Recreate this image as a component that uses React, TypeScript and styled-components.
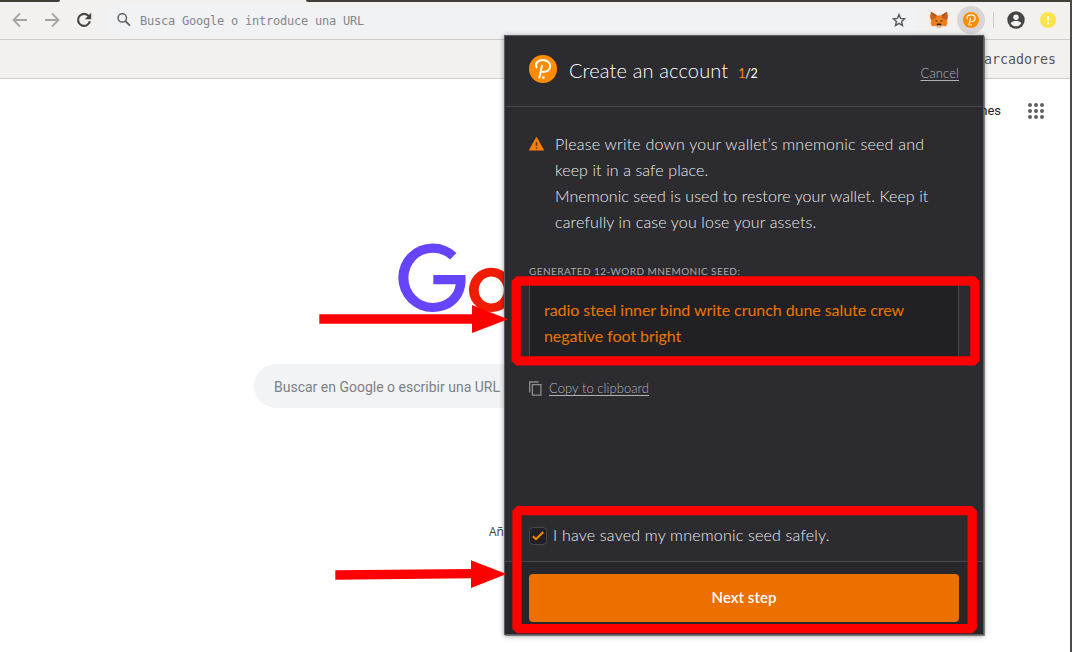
import React from "react";
import styled, { createGlobalStyle } from "styled-components";

const GlobalStyle = createGlobalStyle`
  * { box-sizing: border-box; }
  html, body { margin: 0; padding: 0; background: #fff; overflow: hidden; }
`;

const mono = `"DejaVu Sans Mono", monospace`;
const ui = `Roboto, "Liberation Sans", sans-serif`;
const wallet = `Lato, "Open Sans", sans-serif`;

const Window = styled.div`
  position: relative;
  display: flex;
  flex-direction: column;
  width: 1072px;
  height: 652px;
  background: #fff;
  border-right: 2px solid #4a4b41;
  overflow: hidden;
  font-family: ${ui};
`;

const TabStrip = styled.div`
  display: flex;
  justify-content: space-between;
  height: 2px;
  flex: none;
  background: #f2f1ef;
`;

const InactiveTabs = styled.div<{ $width: number; $side: "left" | "right" }>`
  width: ${(p) => p.$width}px;
  height: 2px;
  background: #403e36;
  border-radius: ${(p) => (p.$side === "left" ? "0 0 3px 0" : "0 0 0 3px")};
`;

const Toolbar = styled.div`
  display: flex;
  align-items: center;
  height: 38px;
  flex: none;
  padding: 0 14px 2px 12px;
  background: #f2f1ef;
  border-bottom: 1px solid #cfcdca;
`;

const NavButtons = styled.div`
  display: flex;
  gap: 16px;
  width: 94px;
`;

const Omnibox = styled.div`
  display: flex;
  align-items: center;
  width: 812px;
  height: 30px;
  padding: 0 12px 0 10px;
  border-radius: 15px;
  background: #f0f2f4;
`;

const OmniText = styled.span`
  flex: 1;
  margin-left: 8px;
  padding-top: 2px;
  font: 12px/16px ${mono};
  letter-spacing: -0.225px;
  color: #85868c;
`;

const Extensions = styled.div`
  display: flex;
  flex: 1;
  align-items: center;
  margin-left: 12px;
`;

const ActiveExtension = styled.div`
  display: flex;
  align-items: center;
  justify-content: center;
  width: 28px;
  height: 28px;
  margin-left: 9px;
  border-radius: 50%;
  background: #d8d6d4;
`;

const Divider = styled.div`
  width: 1px;
  height: 16px;
  margin: 0 13px 0 8px;
  background: #cfcdca;
`;

const UpdateBadge = styled.svg`
  display: block;
  margin-left: auto;
`;

const Bookmarks = styled.div`
  display: flex;
  align-items: center;
  justify-content: flex-end;
  height: 39px;
  flex: none;
  padding: 2px 14px 0 0;
  background: #f2f1ef;
  border-bottom: 1px solid #cfcdca;
  font: 13.3px/18px ${mono};
  color: #55565a;
`;

const Page = styled.main`
  display: flex;
  flex-direction: column;
  flex: 1;
`;

const PageNav = styled.nav`
  display: flex;
  align-items: center;
  justify-content: flex-end;
  gap: 27px;
  height: 64px;
  padding-right: 26px;
  font-size: 13px;
  line-height: 16px;
  color: #222;
  span { padding-bottom: 1px; }
`;

const Logo = styled.svg`
  display: block;
  width: 272px;
  height: 92px;
  margin: 99px 0 0 398px;
  overflow: visible;
`;

const SearchBox = styled.div`
  display: flex;
  align-items: center;
  width: 561px;
  height: 44px;
  margin: 30px 0 0 254px;
  padding: 2px 20px 0;
  border-radius: 22px;
  background: #f1f3f4;
  font-size: 14px;
  color: #7d8085;
`;

const Shortcut = styled.div`
  margin: 117px 0 0 489px;
  font-family: "Open Sans", sans-serif;
  font-size: 12px;
  line-height: 14px;
  color: #3c4043;
`;

const Popup = styled.section`
  position: absolute;
  left: 504px;
  top: 35px;
  display: flex;
  flex-direction: column;
  width: 480px;
  height: 600px;
  border: 1px solid #5b5b61;
  background: #2c2b30;
  box-shadow: 0 0 1px 0.5px rgba(0, 0, 0, 0.4), 0 1px 5px rgba(0, 0, 0, 0.4);
  font-family: ${wallet};
  font-weight: 300;
  color: #ebebed;
`;

const Header = styled.header`
  display: flex;
  align-items: center;
  height: 71px;
  padding: 0 24px;
  border-bottom: 1px solid #47464c;
`;

const HeaderLogo = styled.div`
  display: flex;
  margin: -4px 12px 0 0;
`;

const Text = styled.span<{ $track?: number }>`
  display: block;
  white-space: nowrap;
  letter-spacing: ${(p) => p.$track ?? 0}px;
`;

const Title = styled(Text)`
  margin-top: -2px;
  font-size: 20px;
  color: #fff;
`;

const Step = styled.span`
  flex: 1;
  margin: 4px 0 0 10px;
  font-size: 12.5px;
  letter-spacing: -0.3px;
  font-weight: 400;
  color: #fff;
  em {
    font-style: normal;
    color: #ff8800;
  }
`;

const TextLink = styled.a<{ $track?: number }>`
  font-size: 13px;
  letter-spacing: ${(p) => p.$track ?? 0}px;
  color: #b2b1b4;
  text-decoration: underline;
  text-underline-offset: 2px;
  text-decoration-thickness: 1px;
`;

const CancelLink = styled(TextLink)`
  margin-top: 3px;
`;

const Body = styled.div`
  display: flex;
  flex-direction: column;
  flex: 1;
  padding: 24px 24px 0;
`;

const Notice = styled.div`
  display: flex;
  gap: 11px;
  font-size: 16px;
  line-height: 26px;
  svg { margin-top: 6px; }
`;

const SeedLabel = styled(Text)`
  margin-top: 30px;
  font-size: 10px;
  line-height: 12px;
  font-weight: 400;
  color: #a9a8ab;
`;

const SeedBox = styled.div`
  height: 80px;
  margin-top: 4px;
  padding: 15px 14px;
  border: 1px solid #47464c;
  background: #212025;
  font-size: 16px;
  line-height: 26px;
  font-weight: 400;
  color: #ec7600;
`;

const CopyRow = styled.div`
  display: flex;
  align-items: center;
  gap: 7px;
  margin-top: 18px;
  height: 18px;
`;

const Confirm = styled.label`
  display: flex;
  align-items: center;
  gap: 6px;
  height: 26px;
  margin: auto 0 12px;
  font-size: 16px;
  line-height: 20px;
`;

const ConfirmText = styled(Text)`
  margin-top: -2px;
`;

const Check = styled.span`
  display: flex;
  align-items: center;
  justify-content: center;
  width: 18px;
  height: 18px;
  border: 1px solid #47464c;
  border-radius: 4px;
  background: #212025;
`;

const Footer = styled.footer`
  height: 73px;
  padding: 12px 24px;
  border-top: 1px solid #47464c;
  background: #27262b;
`;

const NextButton = styled.button`
  display: flex;
  align-items: center;
  justify-content: center;
  width: 430px;
  height: 48px;
  padding: 0 0 2px;
  border: 0;
  border-radius: 4px;
  background: #eb7000;
  font: 600 15px/20px ${wallet};
  letter-spacing: 0.05px;
  color: #fff;
`;

const Annotations = styled.svg`
  position: absolute;
  left: 0;
  top: 0;
  pointer-events: none;
`;

const WalletMark = ({ size }: { size: number }) => (
  <svg width={size} height={size} viewBox="0 0 28 28">
    <circle cx="14" cy="14" r="14" fill="#ff8c00" />
    <path
      d="M7.6 12.4C5.6 8.6 9 5 13.8 5c4.4 0 7.400 2.700 7.400 6.100 0 3.700-3 6-7.600 6"
      fill="none"
      stroke="#fff"
      strokeWidth="2"
      strokeLinecap="round"
    />
    <path d="M13 10.800 10.400 22.600" stroke="#fff" strokeWidth="2" strokeLinecap="round" />
    <circle cx="14.400" cy="22.600" r="1.400" fill="#fff" />
  </svg>
);

const Fox = () => (
  <svg width="18" height="17" viewBox="0 0 18 17">
    <path d="M1 .8 6.800 4.400h4.400L17 .8l.8 5.200-1 4 .6 2.200-1.400 3.200-3-.6-2.400 1.800H7.400L5 14.800l-3 .6L.6 12.200l.6-2.200-1-4z" fill="#f0801e" />
    <path d="M1 .8 6.800 4.400 5.600 7.600 1.200 9.200.2 6zM17 .8l-5.800 3.600 1.200 3.200 4.400 1.600 1-3.200z" fill="#cd6118" />
    <path d="M1 .8 6.800 4.400 4 5zM17 .8l-5.800 3.600L14 5z" fill="#a5511c" />
    <path d="m4.600 9.200 2.600.4.300 1.600zM13.400 9.200l-2.600.4-.3 1.600z" fill="#333" />
    <path d="m6.600 13.200 1-.8h2.800l1 .8-.6 1.400H7.200z" fill="#222" />
    <path d="m6 15 1.300-.4h3.400L12 15l-1.400 1.400H7.400z" fill="#d7c1b3" />
  </svg>
);

const noticeLines: [string, number][] = [
  ["Please write down your wallet’s mnemonic seed and", 0.23],
  ["keep it in a safe place.", 0.1],
  ["Mnemonic seed is used to restore your wallet. Keep it", 0.08],
  ["carefully in case you lose your assets.", 0.15],
];

const seedLines: [string, number][] = [
  ["radio steel inner bind write crunch dune salute crew", -0.055],
  ["negative foot bright", -0.055],
];

export default function App() {
  return (
    <>
      <GlobalStyle />
      <Window>
        <TabStrip>
          <InactiveTabs $width={60} $side="left" />
          <InactiveTabs $width={764} $side="right" />
        </TabStrip>
        <Toolbar>
          <NavButtons>
            <svg width="16" height="16" viewBox="0 0 16 16" fill="none" stroke="#a5a4a2" strokeWidth="1.9">
              <path d="M15 8H2M8 1.300 1.600 8 8 14.700" />
            </svg>
            <svg width="16" height="16" viewBox="0 0 16 16" fill="none" stroke="#a5a4a2" strokeWidth="1.9">
              <path d="M1 8h13M8 1.300 14.400 8 8 14.700" />
            </svg>
            <svg width="16" height="16" viewBox="0 0 16 16">
              <path d="M12.800 4.200A6 6 0 1 0 13.900 9.300" fill="none" stroke="#454545" strokeWidth="2.1" />
              <path d="M15.200.8v6.400H8.800z" fill="#454545" />
            </svg>
          </NavButtons>
          <Omnibox>
            <svg width="16" height="16" viewBox="0 0 16 16" fill="none" stroke="#5f6165" strokeWidth="1.5">
              <circle cx="6.300" cy="5.900" r="4.200" />
              <path d="m9.400 9.100 4.600 4.500" strokeWidth="1.9" />
            </svg>
            <OmniText>Busca Google o introduce una URL</OmniText>
            <svg width="14" height="14" viewBox="0 0 14 14" fill="none" stroke="#55565a" strokeWidth="1.4">
              <path d="m7 1.600 1.600 3.800 4.100.4-3.100 2.700.9 4L7 10.400l-3.500 2.100.9-4-3.100-2.700 4.100-.4z" />
            </svg>
          </Omnibox>
          <Extensions>
            <Fox />
            <ActiveExtension>
              <WalletMark size={16} />
            </ActiveExtension>
            <Divider />
            <svg width="18" height="18" viewBox="0 0 18 18">
              <circle cx="9" cy="9" r="8.700" fill="#454545" />
              <circle cx="9" cy="6.200" r="2.700" fill="#f2f1ef" />
              <path d="M3.600 12.200C4.500 10.600 7 10 9 10s4.500.6 5.400 2.200A6.500 6.500 0 0 1 9 15.300a6.500 6.500 0 0 1-5.400-3.100z" fill="#f2f1ef" />
            </svg>
            <UpdateBadge width="16" height="16" viewBox="0 0 16 16">
              <circle cx="8" cy="8" r="8" fill="#f9e54b" />
              <path d="M8 4v4.500M8 10.300v1.900" stroke="#fff" strokeWidth="2" />
            </UpdateBadge>
          </Extensions>
        </Toolbar>
        <Bookmarks>marcadores</Bookmarks>
        <Page>
          <PageNav>
            <span>Imágenes</span>
            <svg width="16" height="16" viewBox="0 0 16 16" fill="#5f6066">
              {[2, 8, 14].map((y) => [2, 8, 14].map((x) => <circle key={`${x}-${y}`} cx={x} cy={y} r="2" />))}
            </svg>
          </PageNav>
          <Logo viewBox="0 0 272 92">
            <path
              d="M58.500 11A34.300 34.300 0 0 0 34.600 1.400A34.300 34.300 0 0 0 34.600 70C56 70 69.500 54.500 67.400 33H35.300V42.300H57.700C56.500 53 47.500 60.900 34.600 60.900A24.200 25.100 0 0 1 34.600 10.700C41.500 10.700 47.500 13.200 52 17.500z"
              fill="#6644fc"
            />
            <path fillRule="evenodd" d="M93.300 25.700a22.300 22.200 0 1 0 .01 0zM93.300 34.400a12.600 13.600 0 1 1-.01 0z" fill="#f01c00" />
          </Logo>
          <SearchBox>Buscar en Google o escribir una URL</SearchBox>
          <Shortcut>Añadir</Shortcut>
        </Page>
        <Popup>
          <Header>
            <HeaderLogo>
              <WalletMark size={28} />
            </HeaderLogo>
            <Title $track={0.15}>Create an account</Title>
            <Step>
              <em>1</em>/2
            </Step>
            <CancelLink $track={0.1}>Cancel</CancelLink>
          </Header>
          <Body>
            <Notice>
              <svg width="15" height="14" viewBox="0 0 15 14">
                <path d="M7.500.8 14.300 13H.7z" fill="#ff8000" stroke="#ff8000" strokeWidth="1.200" strokeLinejoin="round" />
                <path d="M7.500 5v4M7.500 10.200v1.600" stroke="#5a3a18" strokeWidth="1.600" />
              </svg>
              <div>
                {noticeLines.map(([line, track]) => (
                  <Text key={line} $track={track}>{line}</Text>
                ))}
              </div>
            </Notice>
            <SeedLabel $track={0.44}>GENERATED 12-WORD MNEMONIC SEED:</SeedLabel>
            <SeedBox>
              {seedLines.map(([line, track]) => (
                <Text key={line} $track={track}>{line}</Text>
              ))}
            </SeedBox>
            <CopyRow>
              <svg width="13" height="15" viewBox="0 0 13 15" fill="none" stroke="#8e8d90" strokeWidth="1.300">
                <path d="M.7 11.500V1h8.800M3.400 3.700h8.500v10.400H3.400z" />
              </svg>
              <TextLink $track={0.06}>Copy to clipboard</TextLink>
            </CopyRow>
            <Confirm>
              <Check>
                <svg width="12" height="10" viewBox="0 0 12 10" fill="none" stroke="#ff8800" strokeWidth="2">
                  <path d="m.8 5.200 3.200 3L11.200 1" />
                </svg>
              </Check>
              <ConfirmText $track={0.2}>I have saved my mnemonic seed safely.</ConfirmText>
            </Confirm>
          </Body>
          <Footer>
            <NextButton>Next step</NextButton>
          </Footer>
        </Popup>
        <Annotations width="1072" height="652" viewBox="0 0 1072 652">
          <g fill="none" stroke="#ff0000" strokeWidth="9.300" strokeLinejoin="bevel">
            <path d="M516.200 281H974.900V360.900H516.200z" />
            <path d="M517 510.700H972.200V628.700H517z" />
          </g>
          <g fill="#ff0000">
            <path d="M319.300 314.200H472V305L508 319.200 472 333V323.800H319.300z" />
            <path d="M335.300 570.300 471 569V560.200L506.500 574 471 588V578.300L335.300 579.800z" />
          </g>
        </Annotations>
      </Window>
    </>
  );
}
